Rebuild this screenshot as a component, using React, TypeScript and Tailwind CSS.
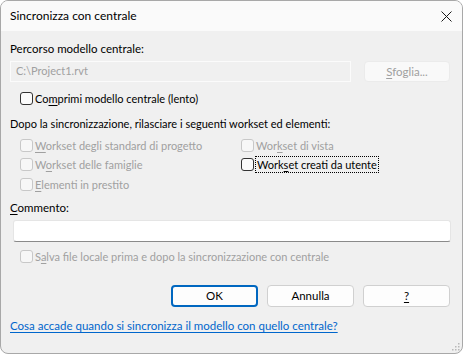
import React from "react";

const font = { fontFamily: 'Lato, "Noto Sans", sans-serif' };

function Box({ disabled }: { disabled?: boolean }) {
  return (
    <span
      className={
        "inline-block w-[13px] h-[13px] rounded-[3px] border shrink-0 " +
        (disabled ? "border-[#c8c8c8] bg-[#f7f7f7]" : "border-[#333333] bg-[#fbfbfb]")
      }
    />
  );
}

function U({ children }: { children: React.ReactNode }) {
  return <span className="underline underline-offset-[2px]">{children}</span>;
}

function Check({
  disabled,
  children,
  focus,
}: {
  disabled?: boolean;
  children: React.ReactNode;
  focus?: boolean;
}) {
  return (
    <div className="flex items-center h-[19.5px]">
      <Box disabled={disabled} />
      <span
        className={
          "ml-[2px] leading-[15px] " +
          (disabled ? "text-[#a0a0a0]" : "text-black") +
          (focus ? " outline outline-1 outline-dotted outline-black px-[1px]" : "")
        }
      >
        {children}
      </span>
    </div>
  );
}

export default function App() {
  return (
    <div
      className="w-[463px] h-[354px] bg-[#f0f0f0] rounded-[8px] border border-[#a8a8a8] overflow-hidden flex flex-col relative text-[11px] text-black"
      style={font}
    >
      {/* Title bar */}
      <div className="h-[30px] bg-[#fafafa] flex items-center justify-between pl-[9px] pr-[10px] shrink-0">
        <span className="text-[12px]">Sincronizza con centrale</span>
        <svg width="11" height="11" viewBox="0 0 11 11" className="mr-[0px]">
          <path d="M0.5 0.5 L10.5 10.5 M10.5 0.5 L0.5 10.5" stroke="#1a1a1a" strokeWidth="1" />
        </svg>
      </div>

      <div className="flex flex-col px-[9px]">
        <div className="mt-[10px] leading-[15px] text-[11.5px]">Percorso modello centrale:</div>
        <div className="flex items-center mt-[5px]">
          <div className="w-[341px] h-[21px] border border-[#fbfbfb] bg-[#f0f0f0] flex items-center pl-[5px] text-[#a0a0a0]">
            C:\Project1.rvt
          </div>
          <div className="ml-[13px] w-[86px] h-[21px] rounded-[4px] bg-[#f9f9f9] border border-[#ebebeb] flex items-center justify-center text-[#a0a0a0] text-[11.5px]">
            <span>
              <U>S</U>foglia...
            </span>
          </div>
        </div>

        <div className="mt-[7px] pl-[10px]">
          <Check>
            Co<U>m</U>primi modello centrale (lento)
          </Check>
        </div>

        <div className="mt-[7px] leading-[15px]">
          Dopo la sincronizzazione, rilasciare i seguenti workset ed elementi:
        </div>

        <div className="mt-[5px] pl-[10px] grid grid-cols-[221px_1fr]">
          <div className="flex flex-col">
            <Check disabled>
              <U>W</U>orkset degli standard di progetto
            </Check>
            <Check disabled>
              W<U>o</U>rkset delle famiglie
            </Check>
            <Check disabled>
              <U>E</U>lementi in prestito
            </Check>
          </div>
          <div className="flex flex-col">
            <Check disabled>
              Wor<U>k</U>set di vista
            </Check>
            <Check focus>
              Work<U>s</U>et creati da utente
            </Check>
          </div>
        </div>

        <div className="mt-[6px] leading-[15px] text-[11.5px]">
          <U>C</U>ommento:
        </div>
        <div className="mt-[5px] ml-[3px] w-[438px] h-[22px] bg-white border border-[#e5e5e5] border-b-[#8a8a8a] rounded-[3px]" />

        <div className="mt-[5px] pl-[10px]">
          <Check disabled>
            S<U>a</U>lva file locale prima e dopo la sincronizzazione con centrale
          </Check>
        </div>

        <div className="mt-[18px] flex justify-end gap-[9px] pr-[3px] text-[11.5px]">
          <div className="w-[87px] h-[22px] rounded-[4px] border-2 border-[#0067c0] bg-[#fdfdfd] flex items-center justify-center">
            OK
          </div>
          <div className="w-[87px] h-[22px] rounded-[4px] border border-[#d0d0d0] bg-[#fdfdfd] flex items-center justify-center">
            Annulla
          </div>
          <div className="w-[87px] h-[22px] rounded-[4px] border border-[#d0d0d0] bg-[#fdfdfd] flex items-center justify-center">
            <U>?</U>
          </div>
        </div>

        <div className="mt-[11px] leading-[15px] text-[11.5px] text-[#0066cc] underline underline-offset-[2px]">
          Cosa accade quando si sincronizza il modello con quello centrale?
        </div>
      </div>

      <svg width="8" height="8" viewBox="0 0 8 8" className="absolute right-[2px] bottom-[2px]">
        <rect x="6" y="0" width="1.5" height="1.5" fill="#b8b8b8" />
        <rect x="3" y="3" width="1.5" height="1.5" fill="#b8b8b8" />
        <rect x="6" y="3" width="1.5" height="1.5" fill="#b8b8b8" />
        <rect x="0" y="6" width="1.5" height="1.5" fill="#b8b8b8" />
        <rect x="3" y="6" width="1.5" height="1.5" fill="#b8b8b8" />
        <rect x="6" y="6" width="1.5" height="1.5" fill="#b8b8b8" />
      </svg>
    </div>
  );
}
